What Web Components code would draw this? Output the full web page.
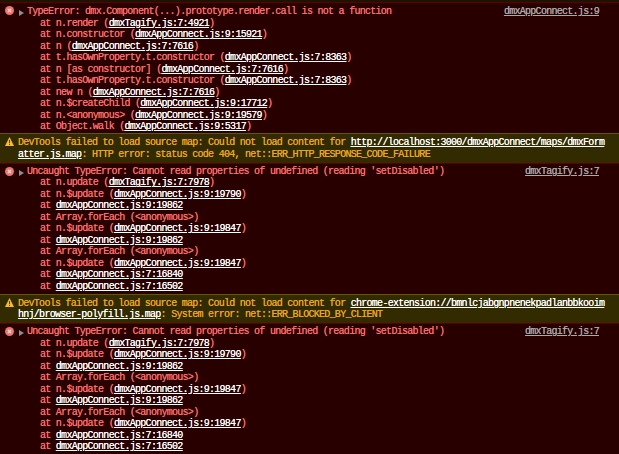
<!doctype html>
<html><head><meta charset="utf-8">
<style>
html,body{margin:0;padding:0;background:#290000;}
body{width:619px;height:454px;overflow:hidden;font:10px/11.5px "Liberation Mono",monospace;letter-spacing:-.72px;}
</style>
</head><body>
<console-log>
<console-msg type="error" expand source="dmxAppConnect.js:9">
<msg-line>TypeError: dmx.Component(...).prototype.render.call is not a function</msg-line>
<msg-line stack>at n.render (<src-link>dmxTagify.js:7:4921</src-link>)</msg-line>
<msg-line stack>at n.constructor (<src-link>dmxAppConnect.js:9:15921</src-link>)</msg-line>
<msg-line stack>at n (<src-link>dmxAppConnect.js:7:7616</src-link>)</msg-line>
<msg-line stack>at t.hasOwnProperty.t.constructor (<src-link>dmxAppConnect.js:7:8363</src-link>)</msg-line>
<msg-line stack>at n [as constructor] (<src-link>dmxAppConnect.js:7:7616</src-link>)</msg-line>
<msg-line stack>at t.hasOwnProperty.t.constructor (<src-link>dmxAppConnect.js:7:8363</src-link>)</msg-line>
<msg-line stack>at new n (<src-link>dmxAppConnect.js:7:7616</src-link>)</msg-line>
<msg-line stack>at n.$createChild (<src-link>dmxAppConnect.js:9:17712</src-link>)</msg-line>
<msg-line stack>at n.&lt;anonymous&gt; (<src-link>dmxAppConnect.js:9:19579</src-link>)</msg-line>
<msg-line stack>at Object.walk (<src-link>dmxAppConnect.js:9:5317</src-link>)</msg-line>
</console-msg>
<console-msg type="warning">
<msg-line>DevTools failed to load source map: Could not load content for <src-link>http://localhost:3000/dmxAppConnect/maps/dmxForm</src-link></msg-line>
<msg-line><src-link>atter.js.map</src-link>: HTTP error: status code 404, net::ERR_HTTP_RESPONSE_CODE_FAILURE</msg-line>
</console-msg>
<console-msg type="error" expand source="dmxTagify.js:7">
<msg-line>Uncaught TypeError: Cannot read properties of undefined (reading 'setDisabled')</msg-line>
<msg-line stack>at n.update (<src-link>dmxTagify.js:7:7978</src-link>)</msg-line>
<msg-line stack>at n.$update (<src-link>dmxAppConnect.js:9:19790</src-link>)</msg-line>
<msg-line stack>at <src-link>dmxAppConnect.js:9:19862</src-link></msg-line>
<msg-line stack>at Array.forEach (&lt;anonymous&gt;)</msg-line>
<msg-line stack>at n.$update (<src-link>dmxAppConnect.js:9:19847</src-link>)</msg-line>
<msg-line stack>at <src-link>dmxAppConnect.js:9:19862</src-link></msg-line>
<msg-line stack>at Array.forEach (&lt;anonymous&gt;)</msg-line>
<msg-line stack>at n.$update (<src-link>dmxAppConnect.js:9:19847</src-link>)</msg-line>
<msg-line stack>at <src-link>dmxAppConnect.js:7:16840</src-link></msg-line>
<msg-line stack>at <src-link>dmxAppConnect.js:7:16502</src-link></msg-line>
</console-msg>
<console-msg type="warning">
<msg-line>DevTools failed to load source map: Could not load content for <src-link>chrome-extension://bmnlcjabgnpnenekpadlanbbkooim</src-link></msg-line>
<msg-line><src-link>hnj/browser-polyfill.js.map</src-link>: System error: net::ERR_BLOCKED_BY_CLIENT</msg-line>
</console-msg>
<console-msg type="error" expand source="dmxTagify.js:7">
<msg-line>Uncaught TypeError: Cannot read properties of undefined (reading 'setDisabled')</msg-line>
<msg-line stack>at n.update (<src-link>dmxTagify.js:7:7978</src-link>)</msg-line>
<msg-line stack>at n.$update (<src-link>dmxAppConnect.js:9:19790</src-link>)</msg-line>
<msg-line stack>at <src-link>dmxAppConnect.js:9:19862</src-link></msg-line>
<msg-line stack>at Array.forEach (&lt;anonymous&gt;)</msg-line>
<msg-line stack>at n.$update (<src-link>dmxAppConnect.js:9:19847</src-link>)</msg-line>
<msg-line stack>at <src-link>dmxAppConnect.js:9:19862</src-link></msg-line>
<msg-line stack>at Array.forEach (&lt;anonymous&gt;)</msg-line>
<msg-line stack>at n.$update (<src-link>dmxAppConnect.js:9:19847</src-link>)</msg-line>
<msg-line stack>at <src-link>dmxAppConnect.js:7:16840</src-link></msg-line>
<msg-line stack>at <src-link>dmxAppConnect.js:7:16502</src-link></msg-line>
</console-msg>
</console-log>
<script>
function def(name, html){
  customElements.define(name, class extends HTMLElement{
    constructor(){super();this.attachShadow({mode:'open'}).innerHTML=html;}
  });
}
def('console-log',`<style>:host{display:flex;flex-direction:column;border-top:2px solid #1e1300;border-bottom:1px solid #5c0000;height:451px}</style><slot></slot>`);
def('src-link',`<style>:host{display:inline;color:#fff;text-decoration:underline;text-underline-offset:1px;text-shadow:0 0 .5px #fff}</style><slot></slot>`);
def('msg-line',`<style>:host{display:block;white-space:pre}:host([stack]){padding-left:13px}</style><slot></slot>`);
const ICONS={
 error:`<svg width="9" height="9" viewBox="0 0 9 9"><circle cx="4.5" cy="4.5" r="4.5" fill="#f0736e"/><path d="M2.8 2.8l3.4 3.4M6.2 2.8l-3.4 3.4" stroke="#ffe6e4" stroke-width="1.1"/></svg>`,
 warning:`<svg width="9" height="9" viewBox="0 0 9 9"><path d="M4.5 0L9 9H0z" fill="#fdb92e"/><path d="M4.5 3v3M4.5 6.8v1.2" stroke="#4a3a00" stroke-width="1"/></svg>`
};
customElements.define('console-msg', class extends HTMLElement{
  constructor(){super();this.attachShadow({mode:'open'});}
  connectedCallback(){
    const t=this.getAttribute('type'),src=this.getAttribute('source'),ex=this.hasAttribute('expand');
    this.shadowRoot.innerHTML=`<style>
      :host{display:flex;box-sizing:border-box;padding-left:5px;text-shadow:0 0 .4px currentColor}
      :host([type=error]){background:#290000;color:#ff6b6b;border-top:1px solid #5c0000;padding-top:2.25px;padding-bottom:1.25px}
      :host([type=error]:first-child){padding-top:3.25px;padding-bottom:.25px}
      :host([type=warning]){background:#332b00;color:#eea41f;border-top:1px solid #665500;padding-top:3.25px;padding-bottom:2.25px}
      .icon{width:9px;height:9px;flex:none;margin-top:1px;display:flex}
      :host([type=warning]) .icon{margin-top:0}
      :host([type=error]:first-child) .icon{margin-top:0}
      .tri{width:8px;flex:none;padding-top:4px;margin-left:5px}
      .tri svg{display:block}
      .body{flex:1;min-width:0;margin-left:${ex?0:4}px}
      .src{flex:none;color:#a9a9a9;text-decoration:underline;text-underline-offset:1px;margin-right:20px;white-space:pre}
    </style>
    <div class="icon">${ICONS[t]}</div>
    ${ex?`<div class="tri"><svg width="5" height="6" viewBox="0 0 5 6"><path d="M0 0l5 3-5 3z" fill="#8f8f8f"/></svg></div>`:''}
    <div class="body"><slot></slot></div>
    ${src?`<div class="src">${src}</div>`:''}`;
  }
});
</script>
</body></html>
